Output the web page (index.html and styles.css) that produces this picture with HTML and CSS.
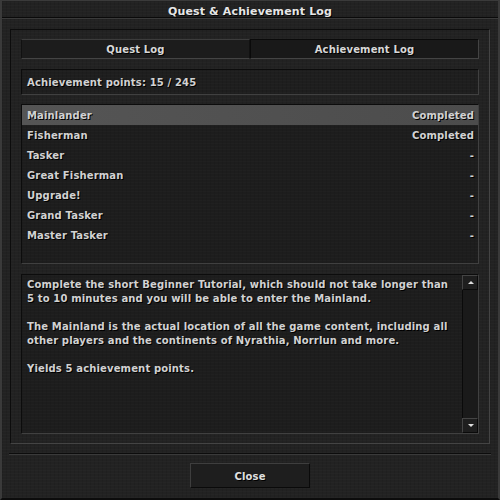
FILE: index.html
```html
<!DOCTYPE html>
<html lang="en">
<head>
    <meta charset="UTF-8">
    <title>Quest &amp; Achievement Log</title>
    <link rel="stylesheet" href="styles.css">
</head>
<body>

<div class="window">
    <div class="titlebar">Quest &amp; Achievement Log</div>

    <div class="content">
        <div class="panel">
            <div class="tabs">
                <div class="tab">Quest Log</div>
                <div class="tab active">Achievement Log</div>
            </div>

            <div class="points">Achievement points: 15 / 245</div>

            <div class="list">
                <div class="row selected"><span>Mainlander</span><span>Completed</span></div>
                <div class="row"><span>Fisherman</span><span>Completed</span></div>
                <div class="row"><span>Tasker</span><span>-</span></div>
                <div class="row"><span>Great Fisherman</span><span>-</span></div>
                <div class="row"><span>Upgrade!</span><span>-</span></div>
                <div class="row"><span>Grand Tasker</span><span>-</span></div>
                <div class="row"><span>Master Tasker</span><span>-</span></div>
            </div>

            <div class="desc">
                <div class="desc-text">
                    <p>Complete the short Beginner Tutorial, which should not take longer than 5 to 10 minutes and you will be able to enter the Mainland.</p>
                    <p>The Mainland is the actual location of all the game content, including all other players and the continents of Nyrathia, Norrlun and more.</p>
                    <p>Yields 5 achievement points.</p>
                </div>
                <div class="scrollbar">
                    <div class="arrow up"></div>
                    <div class="track"></div>
                    <div class="arrow down"></div>
                </div>
            </div>
        </div>

        <div class="separator"></div>

        <div class="footer">
            <button class="close-btn">Close</button>
        </div>
    </div>
</div>

</body>
</html>
```

FILE: styles.css
```css
html, body {
    margin: 0;
    padding: 0;
    background: #111;
}
body {
    width: 500px;
    height: 500px;
    font-family: "DejaVu Sans", Verdana, sans-serif;
    font-size: 10px;
    font-weight: bold;
    letter-spacing: 0.15px;
    color: #d2d2d2;
    text-shadow: 1px 1px 0 #000;
}
.window {
    width: 500px;
    height: 500px;
    box-sizing: border-box;
    border: 2px solid #3a3a3a;
    border-bottom-color: #0c0c0c;
    border-top-width: 1px;
    background-color: #222;
    background-image:
        repeating-linear-gradient(0deg, rgba(255,255,255,0.015) 0 1px, transparent 1px 3px),
        repeating-linear-gradient(90deg, rgba(0,0,0,0.08) 0 1px, transparent 1px 4px);
    display: flex;
    flex-direction: column;
}
.titlebar {
    height: 17px;
    box-sizing: border-box;
    padding-top: 2px;
    line-height: 17px;
    text-align: center;
    color: #e6e6e6;
    font-size: 11px;
    border-bottom: 1px solid #0a0a0a;
    box-shadow: 0 1px 0 #3a3a3a;
}
.content {
    padding: 11px 8px 0 8px;
    display: flex;
    flex-direction: column;
}
.panel {
    border: 1px solid #444;
    border-top-color: #0c0c0c;
    border-left-color: #0c0c0c;
    padding: 9px 10px 9px 10px;
    display: flex;
    flex-direction: column;
    gap: 10px;
}
.tabs {
    display: flex;
    height: 20px;
}
.tab {
    flex: 1;
    padding-top: 2px;
    line-height: 16px;
    text-align: center;
    border: 1px solid #111;
    border-top-color: #3c3c3c;
    border-bottom-color: #444;
    background: #1c1c1c;
    color: #d8d8d8;
}
.tab.active {
    border-top-color: #0a0a0a;
    border-left-color: #0a0a0a;
    border-right-color: #444;
    border-bottom-color: #444;
    background: #191919;
}
.points {
    height: 24px;
    box-sizing: border-box;
    height: 26px;
    padding: 2px 0 0 5px;
    line-height: 22px;
    border: 1px solid #404040;
    border-top-color: #0c0c0c;
    border-left-color: #0c0c0c;
    background: rgba(0,0,0,0.1);
}
.list {
    height: 158px;
    margin-top: -1px;
    border: 1px solid #404040;
    border-top-color: #0c0c0c;
    border-left-color: #0c0c0c;
    background: rgba(0,0,0,0.12);
}
.row {
    height: 20px;
    box-sizing: border-box;
    padding: 2px 4px 0 5px;
    line-height: 18px;
    display: flex;
    justify-content: space-between;
}
.row.selected {
    background: linear-gradient(90deg, #555 0%, #4c4c4c 100%);
}
.desc {
    height: 158px;
    display: flex;
    border: 1px solid #404040;
    border-top-color: #0c0c0c;
    border-left-color: #0c0c0c;
    background: rgba(0,0,0,0.12);
}
.desc-text {
    flex: 1;
    padding: 3px 5px 0 5px;
    line-height: 14px;
}
.desc-text p {
    margin: 0 0 14px 0;
}
.scrollbar {
    width: 16px;
    display: flex;
    flex-direction: column;
    background: #1a1a1a;
}
.arrow {
    height: 13px;
    border: 1px solid #0a0a0a;
    border-top-color: #444;
    border-left-color: #444;
    background: #1e1e1e;
    position: relative;
}
.track {
    flex: 1;
    border-left: 1px solid #0a0a0a;
}
.arrow::after {
    content: "";
    position: absolute;
    left: 5px;
    top: 5px;
    border-left: 3px solid transparent;
    border-right: 3px solid transparent;
}
.arrow.up::after {
    border-bottom: 3px solid #ddd;
}
.arrow.down::after {
    border-top: 3px solid #ddd;
}
.separator {
    margin: 9px -1px 0 -1px;
    height: 1px;
    background: #3a3a3a;
    border-top: 1px solid #0c0c0c;
}
.footer {
    display: flex;
    justify-content: center;
    padding-top: 8px;
}
.close-btn {
    width: 120px;
    height: 25px;
    padding: 1px 0 0 0;
    font-family: inherit;
    font-size: 10px;
    font-weight: bold;
    letter-spacing: 0.15px;
    color: #e0e0e0;
    text-shadow: 1px 1px 0 #000;
    background: #1e1e1e;
    border: 1px solid #0a0a0a;
    border-top-color: #3e3e3e;
    border-left-color: #3e3e3e;
}
```
